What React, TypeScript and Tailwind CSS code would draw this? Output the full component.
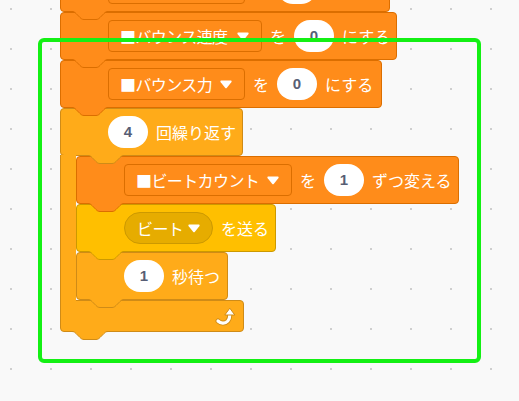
import React from "react";

type Tone = { fill: string; stroke: string };

const VAR: Tone = { fill: "#FF8C1A", stroke: "#DB6E00" };
const CTRL: Tone = { fill: "#FFAB19", stroke: "#CF8B17" };
const EVT: Tone = { fill: "#FFBF00", stroke: "#CC9900" };

// bottom tab of a stack block, drawn over the block below it
const Tab = ({ tone, pos }: { tone: Tone; pos: string }) => (
  <svg width="36" height="10" viewBox="0 0 36 10" className={`pointer-events-none absolute top-full z-10 ${pos}`}>
    <path d="M0 0 c2 0.5 3 1.5 4 2.5 l4 4 c1 1 2 2 4 2 h12 c2 0 3 -1 4 -2 l4 -4 c1 -1 2 -2 4 -2.5 Z" fill={tone.fill} />
    <path
      d="M0 0.5 c2 0 3 1 4 2 l4 4 c1 1 2 2 4 2 h12 c2 0 3 -1 4 -2 l4 -4 c1 -1 2 -2 4 -2"
      fill="none"
      stroke={tone.stroke}
      strokeWidth="1"
    />
  </svg>
);

const Arrow = () => (
  <svg width="12" height="9" viewBox="0 0 12 9" className="shrink-0">
    <path d="M1.2 0.6 H10.8 Q12.2 0.8 11.3 2.2 L6.9 7.8 Q6 8.8 5.1 7.8 L0.7 2.2 Q-0.2 0.8 1.2 0.6 Z" fill="#fff" />
  </svg>
);

const Num = ({ v }: { v: string }) => (
  <div className="flex h-[32px] w-[40px] shrink-0 items-center justify-center rounded-full bg-white font-['Liberation_Sans',sans-serif] text-[15px] font-bold text-[#575E75]">
    {v}
  </div>
);

const Label = ({ children }: { children: React.ReactNode }) => (
  <span className="shrink-0 whitespace-nowrap text-[16px] leading-none text-white">{children}</span>
);

const VarMenu = ({ name, width }: { name: string; width: string }) => (
  <div
    className={`flex h-[32px] shrink-0 items-center justify-between rounded-[4px] border border-[#DB6E00] bg-[#FF8C1A] pl-[11px] pr-[12px] ${width}`}
  >
    <span className="shrink-0 whitespace-nowrap text-[16px] leading-none tracking-[-0.6px] text-white">■{name}</span>
    <Arrow />
  </div>
);

const RepeatIcon = () => (
  <svg width="22" height="20" viewBox="0 0 22 20">
    <g fill="none" strokeLinecap="round" strokeLinejoin="round">
      <path d="M3 15 C5.5 17.5 10 18 12.8 15 C14.4 13.2 14.8 10.5 14.8 8.5" stroke="#CF8B17" strokeWidth="5" />
      <path d="M3 15 C5.5 17.5 10 18 12.8 15 C14.4 13.2 14.8 10.5 14.8 8.5" stroke="#fff" strokeWidth="3.2" />
    </g>
    <path d="M9.8 9 L14.8 2.2 L19.8 9 Z" fill="#fff" stroke="#CF8B17" strokeWidth="1" strokeLinejoin="round" />
  </svg>
);

export default function App() {
  return (
    <div className="relative h-[401px] w-[519px] overflow-hidden bg-[#F9F9F9] bg-[radial-gradient(circle,#cfcfcf_0.8px,transparent_1.2px)] bg-[size:40px_40px] bg-[position:31px_-11px] font-['Noto_Sans_CJK_JP',sans-serif]">
      {/* script stack */}
      <div className="absolute left-[60px] top-[-36px] flex flex-col items-start">
        <div className="relative flex h-[48px] w-[330px] items-center gap-2 rounded-[4px] border border-[#DB6E00] bg-[#FF8C1A] pl-[47px]">
          <VarMenu name="バウンス角度" width="w-[137px]" />
          <Label>を</Label>
          <Num v="0" />
          <Label>にする</Label>
          <Tab tone={VAR} pos="left-[11px]" />
        </div>

        <div className="relative flex h-[48px] w-[337px] items-center gap-2 rounded-[4px] border border-[#DB6E00] bg-[#FF8C1A] pl-[47px]">
          <VarMenu name="バウンス速度" width="w-[154px]" />
          <Label>を</Label>
          <Num v="0" />
          <Label>にする</Label>
          <Tab tone={VAR} pos="left-[11px]" />
        </div>

        <div className="relative flex h-[48px] w-[322px] items-center gap-2 rounded-[4px] border border-[#DB6E00] bg-[#FF8C1A] pl-[47px]">
          <VarMenu name="バウンス力" width="w-[137px]" />
          <Label>を</Label>
          <Num v="0" />
          <Label>にする</Label>
          <Tab tone={VAR} pos="left-[11px]" />
        </div>

        {/* repeat (C block) */}
        <div className="flex flex-col items-start">
          <div className="relative flex h-[48px] w-[183px] items-center gap-2 rounded-[4px] border border-[#CF8B17] bg-[#FFAB19] pl-[47px]">
            <Num v="4" />
            <Label>回繰り返す</Label>
            <Tab tone={CTRL} pos="left-[27px]" />
          </div>

          <div className="flex items-stretch">
            <div className="relative z-[5] -my-px w-[16px] shrink-0 border-l border-[#CF8B17] bg-[#FFAB19]" />
            <div className="flex flex-col items-start">
              <div className="relative flex h-[48px] w-[383px] items-center gap-2 rounded-[4px] border border-[#DB6E00] bg-[#FF8C1A] pl-[47px]">
                <VarMenu name="ビートカウント" width="w-[168px]" />
                <Label>を</Label>
                <Num v="1" />
                <Label>ずつ変える</Label>
                <Tab tone={VAR} pos="left-[11px]" />
              </div>

              <div className="relative flex h-[48px] w-[200px] items-center gap-2 rounded-[4px] border border-[#CC9900] bg-[#FFBF00] pl-[47px]">
                <div className="flex h-[32px] w-[89px] shrink-0 items-center justify-between rounded-full border border-[#CC9900] bg-[#E6AC00] pl-[12px] pr-[12px]">
                  <span className="shrink-0 whitespace-nowrap text-[16px] leading-none tracking-[-0.6px] text-white">ビート</span>
                  <Arrow />
                </div>
                <Label>を送る</Label>
                <Tab tone={EVT} pos="left-[11px]" />
              </div>

              <div className="relative flex h-[48px] w-[152px] items-center gap-2 rounded-[4px] border border-[#CF8B17] bg-[#FFAB19] pl-[47px]">
                <Num v="1" />
                <Label>秒待つ</Label>
                <Tab tone={CTRL} pos="left-[11px]" />
              </div>
            </div>
          </div>

          <div className="relative flex h-[32px] w-[184px] items-center justify-end rounded-[4px] rounded-tl-none border border-[#CF8B17] bg-[#FFAB19] pr-[6px]">
            <RepeatIcon />
            <Tab tone={CTRL} pos="left-[11px]" />
          </div>
        </div>
      </div>

      {/* highlight frame */}
      <div className="pointer-events-none absolute left-[38px] top-[38px] h-[325px] w-[443px] rounded-[6px] border-4 border-[#14f014]" />
    </div>
  );
}
